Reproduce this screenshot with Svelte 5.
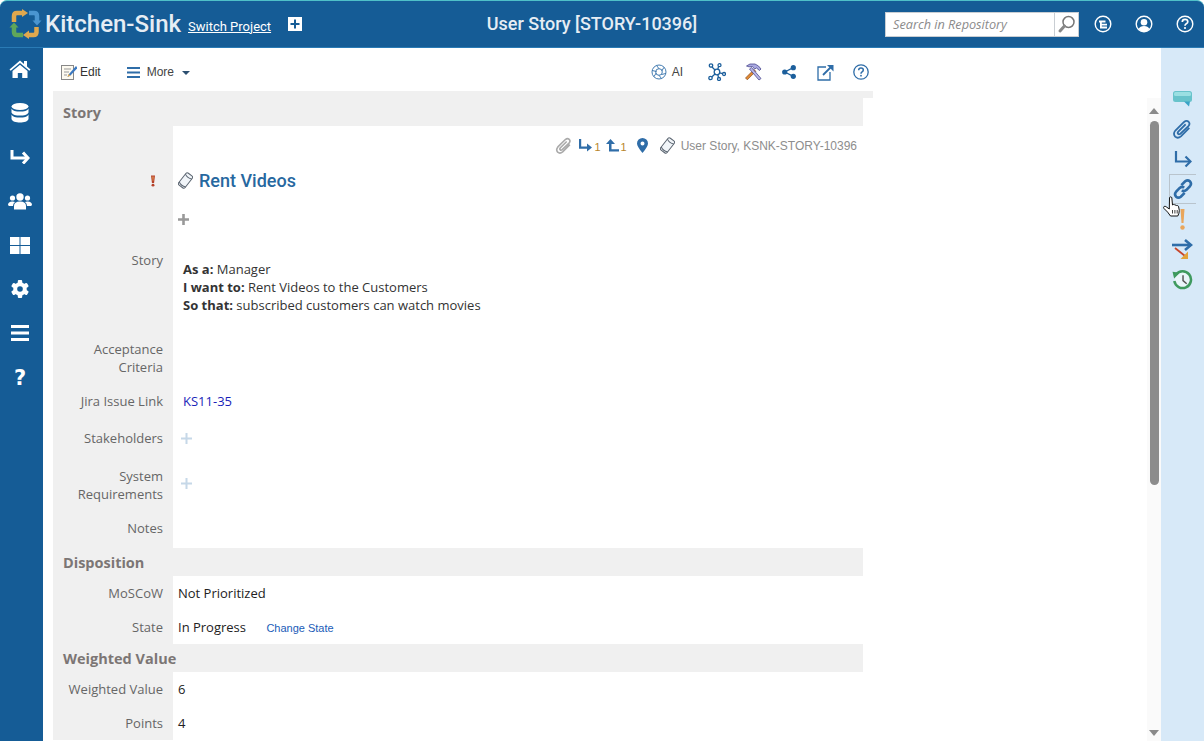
<script>
  const navIcons = ["home", "db", "arrow", "users", "grid", "gear", "bars", "help"];
  const sections = [
    { title: "Disposition", rows: [{ label: "MoSCoW", value: "Not Prioritized" }, { label: "State", value: "In Progress", link: "Change State" }] },
    { title: "Weighted Value", rows: [{ label: "Weighted Value", value: "6" }, { label: "Points", value: "4" }] }
  ];
</script>

{#snippet scrollIcon()}
  <svg class="scroll-svg" width="15" height="17" viewBox="0 0 15 17">
    <g transform="rotate(38 7.500 8.500)" fill="#f1f5f9" stroke="#5a6470" stroke-width="1">
      <rect x="3.500" y="1" width="8" height="15" rx="1.800"/>
      <path d="M3.500 3.500q4 2 8 0M3.500 13.500q4 2 8 0" fill="none"/>
    </g>
  </svg>
{/snippet}

<div class="app">
  <header class="topbar">
    <div class="brand">
      <svg class="logo" width="28" height="28" viewBox="0 0 28 28" fill="none" stroke-width="4.500">
        <path d="M3 12V6q0-3 3-3h6" stroke="#e0a84e"/>
        <path d="M11 -1l6 4-6 4z" fill="#e0a84e"/>
        <path d="M18 3h5q3 0 3 3v7" stroke="#4a95d0"/>
        <path d="M21.500 10h9l-4.500 5z" fill="#4a95d0" transform="translate(0 .5)"/>
        <path d="M25.500 17v5q0 3-3 3h-5" stroke="#e0a84e"/>
        <path d="M18 20.500l-6 4.500 6 4z" fill="#e0a84e"/>
        <path d="M12 25H6q-3 0-3-3v-5" stroke="#5fa65a"/>
        <path d="M-1.500 17.500h9L3 12.500z" fill="#5fa65a"/>
      </svg>
      <span class="brand-name">Kitchen-Sink</span>
      <a class="switch" href="#top">Switch Project</a>
      <span class="add-box">
        <svg width="14" height="14" viewBox="0 0 14 14"><path d="M6 2.500h2V6h3.500v2H8v3.500H6V8H2.500V6H6z" fill="#155c96"/></svg>
      </span>
    </div>
    <div class="page-title">User Story [STORY-10396]</div>
    <div class="top-right">
      <div class="search">
        <span class="search-input">Search in Repository</span>
        <span class="search-btn">
          <svg width="20" height="20" viewBox="0 0 20 20" fill="none"><circle cx="11.500" cy="8" r="5.500" stroke="#777" stroke-width="1.500"/><path d="M7.500 12l-4.500 5" stroke="#888" stroke-width="3" stroke-linecap="round"/></svg>
        </span>
      </div>
      <svg class="top-ic" width="18" height="18" viewBox="0 0 18 18" fill="none"><circle cx="9" cy="9" r="7.800" stroke="#fff" stroke-width="1.400"/><path d="M5 5.500h6.500v2H7.800v1.200h5.200v1.700H7.800v1.200h5.200V13.500H6v-6H5z" fill="#fff"/></svg>
      <svg class="top-ic" width="18" height="18" viewBox="0 0 18 18" fill="none"><circle cx="9" cy="9" r="7.800" stroke="#fff" stroke-width="1.400"/><circle cx="9" cy="7.300" r="3.300" fill="#fff"/><path d="M3.500 14q1.500-3 5.500-3t5.500 3q-2.500 2.500-5.500 2.500T3.500 14z" fill="#fff"/></svg>
      <svg class="top-ic" width="18" height="18" viewBox="0 0 18 18" fill="none"><circle cx="9" cy="9" r="7.800" stroke="#fff" stroke-width="1.400"/><path d="M6.300 7q0-2.600 2.700-2.600T11.800 6.700Q11.800 8 10.300 8.800 9 9.500 9 10.700" stroke="#fff" stroke-width="1.700"/><circle cx="9" cy="13" r="1.100" fill="#fff"/></svg>
    </div>
  </header>

  <div class="body">
    <nav class="sidenav">
      {#each navIcons as name}
        <div class="nav-item">
          {#if name === "home"}
            <svg width="22" height="18" viewBox="0 0 22 18" fill="#fff"><path d="M11 0.500 0.500 9.500l1.200 1.200L11 3l9.300 7.700 1.200-1.200-3.500-3V1h-3v3z"/><path d="M3.500 11 11 4.800 18.500 11v7h-5.300v-5H8.800v5H3.500z"/></svg>
          {:else if name === "db"}
            <svg width="18" height="20" viewBox="0 0 18 20" fill="#fff"><ellipse cx="9" cy="3.500" rx="8.500" ry="3.500"/><path d="M.5 5.500C1.500 8 5 8.500 9 8.500s7.500-.5 8.500-3v4C16.500 12 13 12.500 9 12.500S1.500 12 .5 9.500z"/><path d="M.5 11.500C1.500 14 5 14.500 9 14.500s7.500-.5 8.500-3V16c-.5 2.500-4.500 3.500-8.500 3.500S1 18.500.5 16z"/></svg>
          {:else if name === "arrow"}
            <svg width="20" height="14" viewBox="0 0 20 14" fill="none" stroke="#fff" stroke-width="3"><path d="M2 0v8h15"/><path d="M13 2.500 18 8l-5 5.500"/></svg>
          {:else if name === "users"}
            <svg width="24" height="17" viewBox="0 0 24 17" fill="#fff"><circle cx="12" cy="4" r="3.700"/><circle cx="4.500" cy="5" r="2.600"/><circle cx="19.500" cy="5" r="2.600"/><path d="M6 16.500v-3.500q0-4.500 6-4.500t6 4.500v3.500z"/><path d="M0 12q0-3.500 4.500-3.500 1.500 0 2.500.5-2 1.500-2 4H1zM24 12q0-3.500-4.500-3.500-1.500 0-2.500.5 2 1.500 2 4h4z"/></svg>
          {:else if name === "grid"}
            <svg width="20" height="17" viewBox="0 0 20 17" fill="#fff"><rect width="9.500" height="8"/><rect x="10.500" width="9.500" height="8"/><rect y="9" width="9.500" height="8"/><rect x="10.500" y="9" width="9.500" height="8"/></svg>
          {:else if name === "gear"}
            <svg width="18" height="18" viewBox="0 0 18 18"><g fill="#fff"><circle cx="9" cy="9" r="6.800"/><rect x="6.800" y="0" width="4.400" height="18" rx="1"/><rect x="6.800" y="0" width="4.400" height="18" rx="1" transform="rotate(60 9 9)"/><rect x="6.800" y="0" width="4.400" height="18" rx="1" transform="rotate(120 9 9)"/></g><circle cx="9" cy="9" r="2.800" fill="#155c96"/></svg>
          {:else if name === "bars"}
            <svg width="18" height="16" viewBox="0 0 18 16" fill="#fff"><rect width="18" height="3"/><rect y="6.500" width="18" height="3"/><rect y="13" width="18" height="3"/></svg>
          {:else}
            <span class="nav-help">?</span>
          {/if}
        </div>
      {/each}
    </nav>

    <main class="content">
      <div class="toolbar">
        <div class="tool-left">
          <span class="tool">
            <svg width="16" height="16" viewBox="0 0 16 16"><rect x=".5" y="1.500" width="12" height="14" fill="#fdfaf0" stroke="#888"/><path d="M3 5h7M3 8h5M3 11h3" stroke="#999"/><path d="M15 2 8 10l-1.500 3 3-1.500 7-7.500z" fill="#3b78c0"/><path d="M6.500 13l1-3 2 1.500z" fill="#e0a84e"/></svg>
            Edit
          </span>
          <span class="tool more">
            <svg width="13" height="11" viewBox="0 0 13 11" fill="#2f6da8"><rect width="13" height="2"/><rect y="4.500" width="13" height="2"/><rect y="9" width="13" height="2"/></svg>
            More
            <i class="caret"></i>
          </span>
        </div>
        <div class="tool-right">
          <span class="ai">
            <svg width="16" height="16" viewBox="0 0 16 16" fill="none" stroke="#2f6da8" stroke-width=".9"><circle cx="8" cy="8" r="7"/><circle cx="8" cy="8" r="3.300"/><path d="M5.500 1.500 8 4.700M12.800 3.500l-2 3.500M14.800 9.500l-4.300 1M10.500 14.500 8 11.300M3 12.500l2.200-3.500M1.200 6.500l4.300 1"/></svg>
            AI
          </span>
          <span class="tool-cell">
            <svg width="18" height="18" viewBox="0 0 18 18" fill="none" stroke="#1c5f9c" stroke-width="1.300"><circle cx="9" cy="9" r="2.800"/><circle cx="3" cy="2.500" r="1.700"/><circle cx="11.500" cy="2.200" r="1.500"/><circle cx="2.500" cy="15" r="1.700"/><circle cx="11" cy="16" r="1.500"/><circle cx="16" cy="11" r="1.500"/><path d="M4 4l3 3M10.500 3.700 9.800 6.300M4 13.700 7 11M10.500 14.500 9.800 11.700M14.500 10.600l-2.800-.8"/></svg>
          </span>
          <span class="tool-cell">
            <svg width="18" height="18" viewBox="0 0 18 18"><path d="M1.500 15 10 6.500l1.800 1.800-8.500 8.500z" fill="#e08a35" stroke="#8a4a1c" stroke-width=".7"/><path d="M15 17 5.500 6 7.500 4.500l9.500 11z" fill="#b9b8e8" stroke="#4b4a90" stroke-width=".8"/><path d="M2.500 3 6 1h5l3.500 2 2.500 3-1.500 1.500-3-2.500-2 1-2-2.500-3.500.3z" fill="#a9a8e0" stroke="#4b4a90" stroke-width=".8"/></svg>
          </span>
          <span class="tool-cell">
            <svg width="14" height="14" viewBox="0 0 14 14" fill="#1c5f9c"><circle cx="2.700" cy="7" r="2.600"/><circle cx="11.300" cy="2.700" r="2.600"/><circle cx="11.300" cy="11.300" r="2.600"/><path d="M2.700 7l8.600-4.300M2.700 7l8.600 4.300" stroke="#1c5f9c" stroke-width="1.300"/></svg>
          </span>
          <span class="tool-cell">
            <svg width="17" height="17" viewBox="0 0 17 17" fill="none" stroke="#2f6da8" stroke-width="1.300"><path d="M9 3H1v13h12V8"/><path d="M6 11 15 2" stroke-width="1.800"/><path d="M10 1h6.500v6.500z" fill="#2f6da8" stroke="none"/></svg>
          </span>
          <span class="tool-cell">
            <svg width="16" height="16" viewBox="0 0 16 16" fill="none" stroke="#2f6da8" stroke-width="1.300"><circle cx="8" cy="8" r="7.200"/><path d="M5.700 6.300q0-2.200 2.300-2.200t2.300 1.900q0 1.100-1.200 1.800Q8 8.500 8 9.700" stroke-width="1.500"/><circle cx="8" cy="11.700" r=".9" fill="#2f6da8" stroke="none"/></svg>
          </span>
        </div>
      </div>

      <div class="form">
        <div class="top-band"></div>
        <h3 class="section">Story</h3>

        <div class="row meta-row">
          <div class="label"></div>
          <div class="value meta">
            <svg width="18" height="18" viewBox="0 0 20 20" fill="none" stroke="#aaa" stroke-width="1.800"><path d="M16.500 8.500 8.500 16.500q-3 2.500-5.500.3-2.300-2.800.2-5.800L11.500 2.800q2.300-1.900 4.300-.2 1.800 2-.2 4.200L8 14q-1.300 1-2.200.2-.9-1 .2-2.200l7-7"/></svg>
            <span class="rel">
              <svg width="14" height="14" viewBox="0 0 14 14"><path d="M1 0h2.200v7.500H9V4.500l5 4-5 4V9.700H1z" fill="#2f6da8"/></svg><sub>1</sub>
            </span>
            <span class="rel second">
              <svg width="15" height="14" viewBox="0 0 15 14"><path d="M15 12.500H5V5H2l4.500-5L11 5H7.500v5.300H15z" fill="#2f6da8"/></svg><sub>1</sub>
            </span>
            <svg class="pin" width="11" height="15" viewBox="0 0 11 15"><path fill-rule="evenodd" d="M5.500 0A5.500 5.500 0 0 1 11 5.500Q11 8.500 5.500 15 0 8.500 0 5.500A5.500 5.500 0 0 1 5.500 0zm0 3.500a2 2 0 1 0 0 4 2 2 0 0 0 0-4z" fill="#2f6da8"/></svg>
            <span class="scroll-ic">{@render scrollIcon()}</span>
            <span class="meta-text">User Story, KSNK-STORY-10396</span>
          </div>
        </div>

        <div class="row title-row">
          <div class="label important">
            <svg width="4" height="14" viewBox="0 0 5 14"><path d="M0 0h5L3.800 9.500H1.200z" fill="#b5412a"/><path d="M1.700 1.500h1.600L2.800 7h-.6z" fill="#e9a65c"/><circle cx="2.500" cy="12.200" r="1.800" fill="#b5412a"/></svg>
          </div>
          <div class="value title-wrap">
            {@render scrollIcon()}
            <h1>Rent Videos</h1>
          </div>
        </div>

        <div class="row tag-row">
          <div class="label"></div>
          <div class="value plus-cell">
            <svg width="11" height="11" viewBox="0 0 11 11"><path d="M4.200 0h2.600v4.200H11v2.600H6.800V11H4.200V6.800H0V4.200h4.200z" fill="#999"/></svg>
          </div>
        </div>

        <div class="row story-row">
          <div class="label">Story</div>
          <div class="value story">
            <p><b>As a:</b> Manager</p>
            <p><b>I want to:</b> Rent Videos to the Customers</p>
            <p><b>So that:</b> subscribed customers can watch movies</p>
          </div>
        </div>

        <div class="row acc-row">
          <div class="label">Acceptance Criteria</div>
          <div class="value"></div>
        </div>

        <div class="row jira-row">
          <div class="label">Jira Issue Link</div>
          <div class="value"><a class="jira" href="#top">KS11-35</a></div>
        </div>

        <div class="row stake-row">
          <div class="label">Stakeholders</div>
          <div class="value plus-cell">
            <svg class="pale" width="11" height="11" viewBox="0 0 11 11"><path d="M4.500 0h2v4.500H11v2H6.500V11h-2V6.500H0v-2h4.500z" fill="#c6d8e8"/></svg>
          </div>
        </div>

        <div class="row sys-row">
          <div class="label">System Requirements</div>
          <div class="value plus-cell">
            <svg class="pale" width="11" height="11" viewBox="0 0 11 11"><path d="M4.500 0h2v4.500H11v2H6.500V11h-2V6.500H0v-2h4.500z" fill="#c6d8e8"/></svg>
          </div>
        </div>

        <div class="row notes-row">
          <div class="label">Notes</div>
          <div class="value"></div>
        </div>

        {#each sections as section}
          <h3 class="section">{section.title}</h3>
          {#each section.rows as row}
            <div class="row data-row">
              <div class="label">{row.label}</div>
              <div class="value">
                {row.value}
                {#if row.link}<a class="state-link" href="#top">{row.link}</a>{/if}
              </div>
            </div>
          {/each}
        {/each}
      </div>
    </main>

    <div class="scrollbar">
      <i class="up"></i>
      <div class="thumb"></div>
      <div class="track-gap"></div>
      <i class="down"></i>
    </div>

    <aside class="rail">
      <div class="rail-item">
        <svg width="19" height="16" viewBox="0 0 19 16"><rect x="0" y="0" width="19" height="11" rx="2.500" fill="#68c3cb"/><rect x="1" y="1" width="17" height="4" rx="1.500" fill="#9adfe2"/><path d="M11 10.500h6l-1 5z" fill="#3aa3c6"/></svg>
      </div>
      <div class="rail-item">
        <svg width="21" height="21" viewBox="0 0 20 20" fill="none" stroke="#2f6da8" stroke-width="1.700"><path d="M16.500 8.500 8.500 16.500q-3 2.500-5.500.3-2.300-2.800.2-5.800L11.500 2.800q2.300-1.900 4.300-.2 1.800 2-.2 4.200L8 14q-1.300 1-2.200.2-.9-1 .2-2.200l7-7"/></svg>
      </div>
      <div class="rail-item">
        <svg width="18" height="17" viewBox="0 0 18 17" fill="none" stroke="#2f6da8" stroke-width="2.200"><path d="M2 0v10.500h14"/><path d="M11.500 5.500l5 5-5 5"/></svg>
      </div>
      <div class="rail-item active">
        <svg width="22" height="22" viewBox="0 0 20 20" fill="none" stroke="#2f6da8" stroke-width="2.400"><path d="M8.500 6.500 12 3q2.300-1.800 4.200 0 2 2 .2 4.300L13 11q-2.200 1.800-4 .2"/><path d="M11.500 13.500 8 17q-2.300 1.800-4.200 0-2-2-.2-4.300L7 9q2.200-1.800 4-.2"/></svg>
      </div>
      <div class="rail-item">
        <svg width="5" height="21" viewBox="0 0 5 21" fill="#e9a65c"><path d="M.5 0h4L3.500 14h-2z"/><circle cx="2.500" cy="18.500" r="2.200"/></svg>
      </div>
      <div class="rail-item">
        <svg width="21" height="21" viewBox="0 0 21 21" fill="none"><path d="M0 6h18" stroke="#2f6da8" stroke-width="2.600"/><path d="M13 1l6 5-6 5" stroke="#2f6da8" stroke-width="2.600"/><path d="M3 9l10 8" stroke="#c8452a" stroke-width="1.800"/><path d="M16 12.500V20H8.500z" fill="#e3a33a"/></svg>
      </div>
      <div class="rail-item">
        <svg width="21" height="21" viewBox="0 0 20 20" fill="none"><path d="M3.700 5.300A8 8 0 1 1 2.200 11.500" fill="#eaf5fb" stroke="#3f9a5f" stroke-width="2.400"/><path d="M.5 2.500 7.500 3.500 2 9z" fill="#3f9a5f"/><path d="M10.500 6v5l3.500 3" stroke="#555" stroke-width="1.400"/></svg>
      </div>
    </aside>
  </div>

  <svg class="cursor" width="18" height="21" viewBox="0 0 18 21"><path d="M6.500 1.500q1.200-1.200 2.300 0L9.500 9l1-.5q1.100-.2 1.400.7 1-.5 1.800.4 1.100-.4 1.800.7l.8 4q0 3-1.500 5.700H7.500Q5 16 1 12.500q-1-1.300.2-2.100 1-.4 2 .4L6.300 13z" fill="#fff" stroke="#111" stroke-width="1"/><path d="M9.500 14v3.500M11.900 14v3.500M14.200 14v3.500" stroke="#111" stroke-width=".8"/></svg>
</div>

<style>
  :global(html), :global(body) {
    margin: 0;
    height: 100%;
    overflow: hidden;
  }

  .app {
    height: 741px;
    display: flex;
    flex-direction: column;
    position: relative;
    overflow: hidden;
    background: #fff;
    font-family: "Open Sans", sans-serif;
    font-size: 13px;
    color: #222;
  }

  .topbar {
    height: 47px;
    flex: none;
    box-sizing: border-box;
    background: #155c96;
    border-top: 1px solid #4fc0c8;
    border-radius: 7px 7px 0 0;
    display: grid;
    grid-template-columns: 1fr auto 1fr;
    align-items: center;
    color: #fff;
  }

  .brand {
    display: flex;
    align-items: center;
    padding-left: 11px;
  }

  .logo {
    overflow: visible;
  }

  .brand-name {
    font-family: Roboto, sans-serif;
    font-weight: 500;
    font-size: 24px;
    color: #e6edf4;
    margin-left: 6px;
  }

  .switch {
    font-family: Roboto, sans-serif;
    font-size: 13px;
    color: #fff;
    margin-left: 7px;
    margin-top: 4px;
  }

  .add-box {
    width: 14px;
    height: 14px;
    background: #fff;
    margin-left: 17px;
    display: flex;
  }

  .page-title {
    font-family: Roboto, sans-serif;
    font-weight: 500;
    font-size: 18px;
    color: #e6edf4;
    margin: -1px 20px 0 0;
  }

  .top-right {
    display: flex;
    align-items: center;
    justify-content: flex-end;
    padding-right: 10px;
  }

  .search {
    display: flex;
    height: 25px;
    box-sizing: border-box;
    border: 1px solid #c9ced3;
    background: #fff;
    margin-right: 15px;
  }

  .search-input {
    width: 168px;
    padding-left: 7px;
    box-sizing: border-box;
    font-style: italic;
    font-size: 12.700px;
    line-height: 23px;
    color: #8b8b8b;
  }

  .search-btn {
    width: 23px;
    border-left: 1px solid #c9ced3;
    display: flex;
    align-items: center;
    justify-content: center;
  }

  .top-ic {
    margin-right: 23px;
  }

  .top-ic:last-child {
    margin-right: 0;
  }

  .body {
    flex: 1;
    display: flex;
    min-height: 0;
    border-top: 1px solid #2a7bb5;
  }

  .sidenav {
    width: 43px;
    flex: none;
    background: #155c96;
  }

  .nav-item {
    height: 44px;
    display: flex;
    align-items: center;
    justify-content: center;
    margin-left: -3px;
    position: relative;
    top: -1px;
  }

  .nav-help {
    font-family: "DejaVu Sans", sans-serif;
    font-weight: 700;
    font-size: 21px;
    color: #fff;
    margin-top: 2px;
  }

  .content {
    flex: 1;
    min-width: 0;
    overflow: hidden;
    padding-left: 10px;
  }

  .toolbar {
    width: 826px;
    height: 43px;
    display: flex;
    align-items: center;
    justify-content: space-between;
    box-sizing: border-box;
    padding: 5px 0 0 8px;
    font-family: "Liberation Sans", sans-serif;
    font-size: 12px;
    color: #333;
  }

  .tool-left,
  .tool-right,
  .tool {
    display: flex;
    align-items: center;
  }

  .tool {
    gap: 3px;
  }

  .more {
    margin-left: 26px;
    gap: 7px;
    color: #444;
  }

  .caret {
    width: 0;
    height: 0;
    border-left: 4px solid transparent;
    border-right: 4px solid transparent;
    border-top: 4px solid #2c4f70;
    margin: 2px 0 0 1px;
  }

  .tool-cell {
    width: 36px;
    display: flex;
    justify-content: center;
  }

  .ai {
    display: flex;
    align-items: center;
    gap: 5px;
    margin-right: 16px;
    color: #444;
  }

  .form {
    width: 810px;
  }

  .top-band {
    width: 820px;
    height: 7px;
    background: #f0f0f0;
  }

  .section {
    margin: 0;
    height: 28px;
    line-height: 30px;
    padding-left: 10px;
    background: #f0f0f0;
    font-size: 14.500px;
    font-weight: 700;
    color: #7c7675;
  }

  .row {
    display: grid;
    grid-template-columns: 120px 1fr;
    line-height: 18px;
  }

  .label {
    background: #f0f0f0;
    box-sizing: border-box;
    padding: 0 10px 0 5px;
    text-align: right;
    color: #666;
  }

  .acc-row .label,
  .sys-row .label {
    padding-left: 20px;
  }

  .value {
    padding-left: 5px;
    min-width: 0;
  }

  .meta-row { height: 39px; }

  .meta {
    display: flex;
    align-items: center;
    justify-content: flex-end;
    padding: 0 6px 0 0;
    font-family: "Liberation Sans", sans-serif;
    font-size: 12px;
    color: #8d8d8d;
    margin-top: 11px;
    height: 17px;
  }

  .rel {
    display: flex;
    align-items: center;
    margin-left: 5px;
  }

  .rel.second {
    margin-left: 3px;
  }

  .rel sub {
    font-size: 11px;
    line-height: 1;
    color: #b8862c;
    margin: 4px 0 0 2px;
  }

  .pin { margin-left: 10px; }
  .scroll-ic { margin-left: 12px; display: flex; }
  .meta-text { margin-left: 6px; }

  .title-row {
    height: 35px;
  }

  .important {
    display: flex;
    align-items: center;
    justify-content: flex-end;
    padding: 0 18px 4px 0;
  }

  .title-wrap {
    display: flex;
    align-items: center;
    gap: 6px;
    padding-bottom: 4px;
    box-sizing: border-box;
  }

  h1 {
    margin: 0;
    font-family: Roboto, sans-serif;
    font-weight: 500;
    font-size: 18px;
    color: #27689f;
  }

  .tag-row {
    height: 40px;
  }

  .plus-cell {
    display: flex;
    align-items: center;
    padding-bottom: 2px;
    box-sizing: border-box;
  }

  .plus-cell .pale {
    margin-left: 3px;
  }

  .sys-row .plus-cell {
    padding-bottom: 0;
  }

  .story-row { height: 100px; }

  .story-row .label { padding-top: 11px; }

  .story {
    padding: 20px 0 0 10px;
    color: #333;
  }

  .story p { margin: 0; }
  .story b { color: #333; }

  .acc-row { height: 44px; }

  .jira-row { height: 37px; }
  .jira-row .label,
  .jira-row .value { padding-top: 8px; }
  .jira-row .value { padding-left: 10px; }

  .jira {
    color: #1a1fb8;
    text-decoration: none;
  }

  .stake-row { height: 36px; }
  .stake-row .label { padding-top: 8px; }

  .sys-row { height: 53px; }
  .sys-row .label { padding-top: 10px; }

  .notes-row { height: 38px; }
  .notes-row .label { padding-top: 9px; }

  .data-row {
    height: 34px;
    align-items: stretch;
  }

  .data-row .label,
  .data-row .value {
    padding-top: 8px;
  }

  .state-link {
    font-family: "Liberation Sans", sans-serif;
    font-size: 11px;
    color: #1a5cb8;
    text-decoration: none;
    margin-left: 17px;
  }

  .scrollbar {
    width: 14px;
    flex: none;
    margin-top: 50px;
    background: #fafafa;
    display: flex;
    flex-direction: column;
    align-items: center;
  }

  .up,
  .down {
    width: 0;
    height: 0;
    border-left: 5px solid transparent;
    border-right: 5px solid transparent;
  }

  .up {
    border-bottom: 6px solid #8a8a8a;
    margin-top: 10px;
  }

  .down {
    border-top: 6px solid #8a8a8a;
    margin-bottom: 5px;
  }

  .thumb {
    width: 9px;
    height: 364px;
    margin-top: 7px;
    border-radius: 5px;
    background: #8c8c8c;
  }

  .track-gap { flex: 1; }

  .rail {
    width: 43px;
    flex: none;
    background: #d7e9f8;
    padding-top: 36px;
    box-sizing: border-box;
  }

  .rail-item {
    height: 30px;
    display: flex;
    align-items: center;
    justify-content: center;
    box-sizing: border-box;
  }

  .rail-item.active {
    width: 27px;
    margin-left: 8px;
    border: 1px solid #b9c4cd;
    border-right: none;
  }

  .cursor {
    position: absolute;
    left: 1163px;
    top: 196px;
  }
</style>
